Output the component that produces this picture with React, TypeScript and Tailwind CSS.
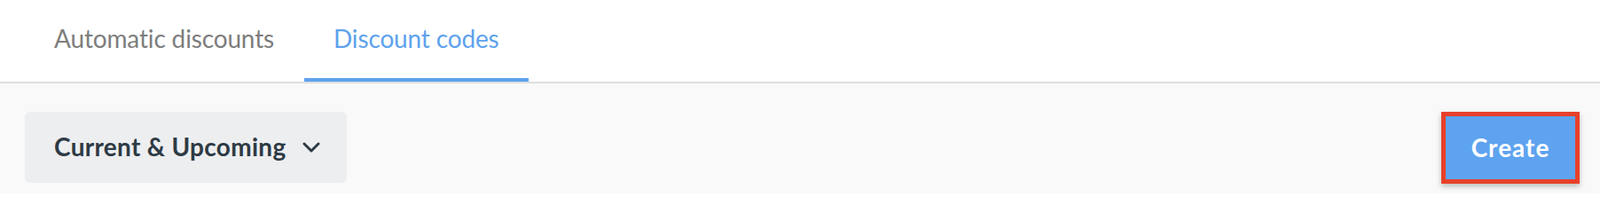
export default function App() {
  const font = { fontFamily: "Lato, 'Noto Sans', sans-serif" };
  return (
    <div className="w-[1804px] h-[218px] bg-[#f9f9f9] overflow-hidden [font-variant-ligatures:none]" style={font}>
      <div className="bg-white border-b-2 border-[#dedede]">
        <div className="flex h-[92px] pl-[27px]">
          <div className="px-[34px] pt-[27px] text-[28px] leading-[1.2] tracking-[-0.15px] text-[#7d7d7d]">
            Automatic discounts
          </div>
          <div className="px-[33px] pt-[27px] text-[28px] leading-[1.2] tracking-[-0.15px] text-[#5ea2ed] border-b-4 border-[#5ea2ed]">
            Discount codes
          </div>
        </div>
      </div>
      <div className="flex items-start justify-between pl-[28px] pr-[23px] pt-[32px]">
        <button className="flex items-center h-[80px] w-[363px] pl-[33px] pr-[30px] rounded-[6px] bg-[#edeef0] text-[#2d3a44] text-[28px] leading-[1.2] font-bold tracking-[0.3px]">
          <span>Current &amp; Upcoming</span>
          <svg className="ml-auto" width="20" height="12" viewBox="0 0 20 12" fill="none">
            <polyline points="2,2 10,10 18,2" stroke="#2d3a44" strokeWidth="3" strokeLinecap="round" strokeLinejoin="round" />
          </svg>
        </button>
        <button className="flex items-center justify-center h-[81px] w-[156px] border-[5px] border-[#e8402a] bg-[#5ea3ef] text-white text-[28px] leading-[1.2] font-bold tracking-[1px] shadow-[0_3px_6px_rgba(0,0,0,0.25)]">
          Create
        </button>
      </div>
    </div>
  );
}
